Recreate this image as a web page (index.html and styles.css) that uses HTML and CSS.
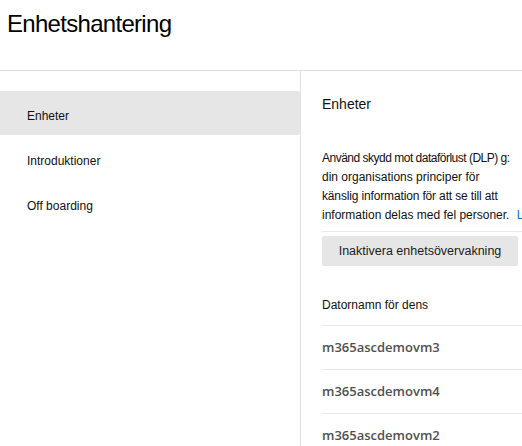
FILE: index.html
```html
<!DOCTYPE html>
<html lang="sv">
<head>
<meta charset="utf-8">
<link rel="stylesheet" href="styles.css">
</head>
<body>
<header class="top">
  <h1 class="title">Enhetshantering</h1>
</header>
<div class="main">
  <nav class="side">
    <div class="item active">Enheter</div>
    <div class="item">Introduktioner</div>
    <div class="item">Off boarding</div>
  </nav>
  <section class="pane">
    <h2 class="heading">Enheter</h2>
    <p class="desc"><span class="tight">Använd skydd mot dataförlust (DLP) g:</span><br>din organisations principer för<br><span class="snug">känslig information för att se till att</span><br>information delas med fel personer. <span class="link">Läs mer</span></p>
    <div class="btnrow">
      <button class="btn">Inaktivera enhetsövervakning</button>
    </div>
    <div class="colhead">Datornamn för dens</div>
    <div class="row">m365ascdemovm3</div>
    <div class="row">m365ascdemovm4</div>
    <div class="row">m365ascdemovm2</div>
  </section>
</div>
</body>
</html>
```

FILE: styles.css
```css
html, body {
  margin: 0;
  padding: 0;
  background: #fff;
}
body {
  width: 522px;
  height: 446px;
  overflow: hidden;
  font-family: "Liberation Sans", Arial, sans-serif;
  color: #1b1b1b;
}
.top {
  height: 71px;
  box-sizing: border-box;
  border-bottom: 1px solid #dedede;
}
.title {
  margin: 0;
  padding: 10px 0 0 7px;
  font-size: 24px;
  letter-spacing: -0.7px;
  font-weight: normal;
  color: #000;
  line-height: 28px;
}
.main {
  display: flex;
  height: 375px;
}
.side {
  width: 300px;
  flex: none;
  border-right: 1px solid #e1e1e1;
  padding-top: 20px;
}
.item {
  height: 45px;
  box-sizing: border-box;
  padding: 6px 0 0 27px;
  line-height: 38px;
  font-size: 12px;
  color: #111;
}
.item.active {
  height: 44px;
  margin-bottom: 1px;
  background: #e6e6e6;
  border-radius: 0 2px 2px 0;
}
.pane {
  flex: 1;
  min-width: 0;
  padding-left: 21px;
  overflow: hidden;
}
.heading {
  margin: 0;
  padding-top: 25px;
  font-size: 14px;
  font-weight: normal;
  line-height: 16px;
  color: #111;
}
.desc {
  margin: 37px 0 0 0;
  font-size: 12px;
  line-height: 19px;
  white-space: nowrap;
  color: #111;
}
.tight {
  letter-spacing: -0.5px;
}
.snug {
  letter-spacing: -0.15px;
}
.link {
  margin-left: 4px;
  color: #0078d4;
}
.btnrow {
  margin-top: 6px;
  border-top: 1px solid #e8e8e8;
  padding-top: 4px;
}
.btn {
  display: block;
  width: 196px;
  height: 30px;
  border: none;
  border-radius: 2px;
  background: #e6e6e6;
  font-family: "Liberation Sans", Arial, sans-serif;
  font-size: 12.5px;
  color: #1b1b1b;
  padding: 0;
  margin: 0;
}
.colhead {
  margin-top: 31px;
  font-size: 12px;
  line-height: 16px;
  color: #111;
  padding-bottom: 12px;
  border-bottom: 1px solid #e8e8e8;
}
.row {
  height: 43px;
  line-height: 43px;
  border-bottom: 1px solid #e8e8e8;
  font-family: "Open Sans", "Liberation Sans", sans-serif;
  font-size: 13px;
  font-weight: 600;
  color: #505050;
}
```
